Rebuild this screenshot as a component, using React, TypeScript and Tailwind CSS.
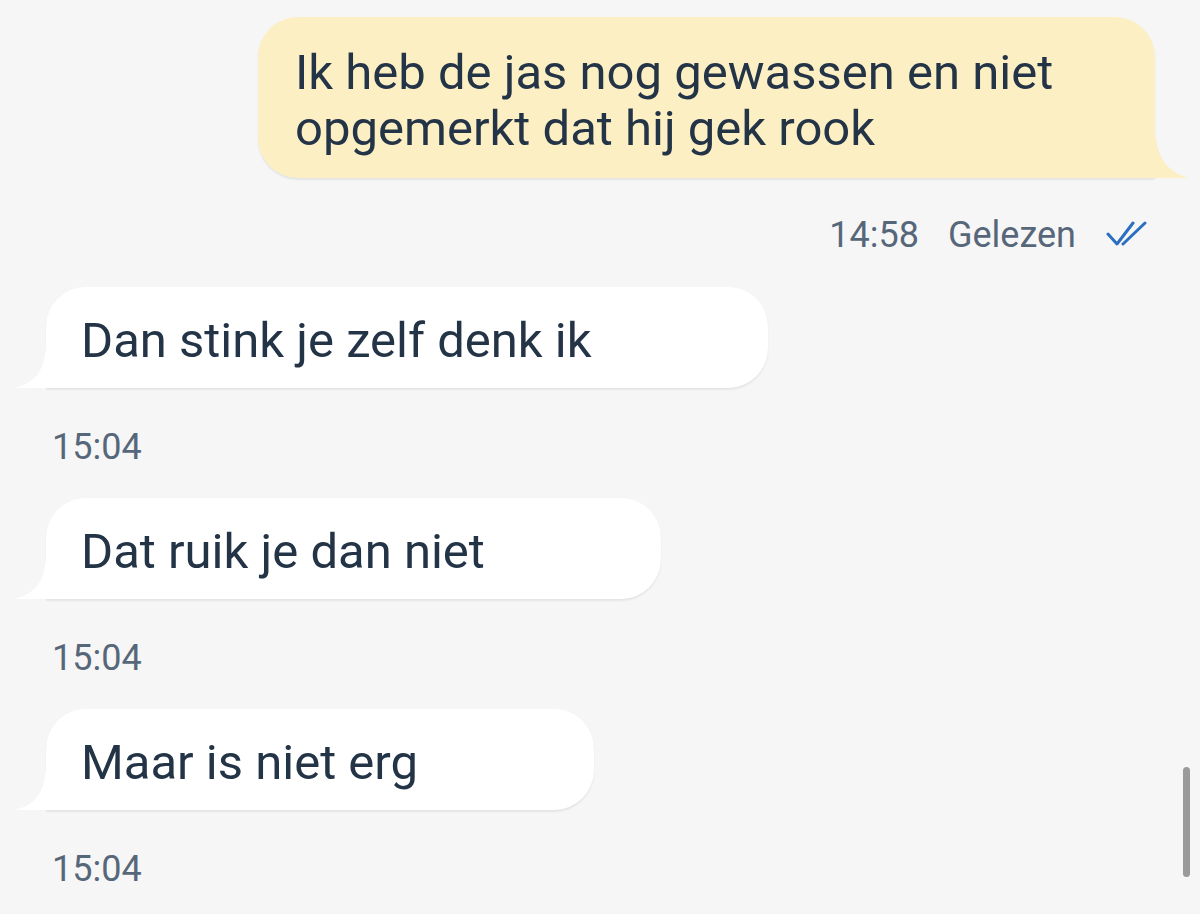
import React from "react";

const font = { fontFamily: "Roboto, 'Noto Sans', sans-serif" };

function TailLeft() {
  return (
    <svg
      className="absolute bottom-0 left-[-32px]"
      width="33"
      height="44"
      viewBox="0 0 33 44"
    >
      <path d="M33 0 L33 44 L0 44 C18 40 31 30 32 0 Z" fill="#ffffff" />
    </svg>
  );
}

function TailRight() {
  return (
    <svg
      className="absolute bottom-0 right-[-34px]"
      width="35"
      height="48"
      viewBox="0 0 35 48"
    >
      <path d="M0 0 L0 48 L35 48 C17 43 3 32 1 0 Z" fill="#fdefc4" />
    </svg>
  );
}

function ReadTicks() {
  return (
    <svg width="42" height="30" viewBox="0 0 42 30" className="text-[#2a6fc0]">
      <path
        d="M3 14 L12 24 L28 3 M18 24 L40 3"
        fill="none"
        stroke="currentColor"
        strokeWidth="3"
        strokeLinecap="round"
        strokeLinejoin="round"
      />
    </svg>
  );
}

function Received({ text, time }: { text: string; time: string }) {
  return (
    <div className="flex flex-col items-start">
      <div className="relative ml-[46px] bg-white rounded-[40px] rounded-bl-none pl-[35px] pr-[176px] pt-[25px] pb-[19px] text-[49px] leading-[57px] text-[#243447] shadow-[0_2px_2px_rgba(0,0,0,0.07)]">
        <TailLeft />
        {text}
      </div>
      <div className="ml-[52px] mt-[39px] text-[36px] leading-[40px] text-[#56677a]">
        {time}
      </div>
    </div>
  );
}

export default function App() {
  return (
    <div
      className="relative h-[914px] w-full overflow-hidden bg-[#f6f6f6]"
      style={font}
    >
      {/* sent */}
      <div className="flex justify-end pr-[45px] pt-[17px]">
        <div className="relative w-[897px] bg-[#fdefc4] rounded-[40px] rounded-br-none pl-[37px] pr-[60px] pt-[28px] pb-[21px] text-[49px] leading-[56px] text-[#243447] shadow-[0_2px_2px_rgba(0,0,0,0.07)]">
          <TailRight />
          Ik heb de jas nog gewassen en niet opgemerkt dat hij gek rook
        </div>
      </div>
      <div className="mt-[37px] flex items-center justify-end gap-[29px] pr-[53px] text-[36px] leading-[40px] text-[#56677a]">
        <span>14:58</span>
        <span>Gelezen</span>
        <ReadTicks />
      </div>

      <div className="mt-[32px] flex flex-col gap-[31px]">
        <Received text="Dan stink je zelf denk ik" time="15:04" />
        <Received text="Dat ruik je dan niet" time="15:04" />
        <Received text="Maar is niet erg" time="15:04" />
      </div>

      {/* scrollbar */}
      <div className="absolute right-[10px] top-[767px] h-[110px] w-[7px] rounded-full bg-[#9a9a9a]" />
    </div>
  );
}
